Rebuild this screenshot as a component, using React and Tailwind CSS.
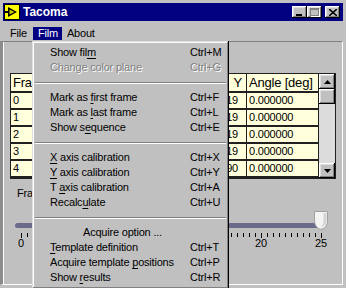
import React from "react";

const U = ({ children }) => (
  <span className="underline decoration-1 underline-offset-[2px]">{children}</span>
);

const menu = [
  { label: <>Show fil<U>m</U></>, sc: "Ctrl+M" },
  { label: "Change color plane", sc: "Ctrl+G", disabled: true },
  { sep: true },
  { label: <>Mark as <U>f</U>irst frame</>, sc: "Ctrl+F" },
  { label: <>Mark as <U>l</U>ast frame</>, sc: "Ctrl+L" },
  { label: <>Show s<U>e</U>quence</>, sc: "Ctrl+E" },
  { sep: true },
  { label: <><U>X</U> axis calibration</>, sc: "Ctrl+X" },
  { label: <><U>Y</U> axis calibration</>, sc: "Ctrl+Y" },
  { label: <>T <U>a</U>xis calibration</>, sc: "Ctrl+A" },
  { label: <>Recalc<U>u</U>late</>, sc: "Ctrl+U" },
  { sep: true },
  { label: "Acquire option ...", indent: true },
  { label: <><U>T</U>emplate definition</>, sc: "Ctrl+T" },
  { label: <>Acquire template <U>p</U>ositions</>, sc: "Ctrl+P" },
  { label: <>Show <U>r</U>esults</>, sc: "Ctrl+R" },
];

// only the parts not hidden by the open menu
const data = [
  ["0", "19", "0.000000"],
  ["1", "19", "0.000000"],
  ["2", "19", "0.000000"],
  ["3", "19", "0.000000"],
  ["4", "90", "0.000000"],
];

const raised =
  "shadow-[inset_-1px_-1px_#000,inset_1px_1px_#fff,inset_-2px_-2px_#808080,inset_2px_2px_#dfdfdf]";

function LvIcon() {
  return (
    <svg width="16" height="16" viewBox="0 0 16 16">
      <rect x="0.5" y="0.5" width="15" height="15" fill="#ffff00" stroke="#000" />
      <path d="M4 3 L13 8 L4 13 Z" fill="#000" />
      <path d="M5.5 5.5 L10.5 8 L5.5 10.5 Z" fill="#c8c800" />
      <rect x="1" y="7" width="4" height="2" fill="#000" />
    </svg>
  );
}

function TitleButton({ children, className = "" }) {
  return (
    <div className={`flex h-[12px] w-[15px] items-center justify-center bg-[#c0c0c0] ${raised} ${className}`}>
      {children}
    </div>
  );
}

function Thumb() {
  return (
    <svg width="14" height="19" viewBox="0 0 14 19">
      <path d="M0.5 0.5 H13.5 V9 Q13.5 17 7 18.5 Q0.5 17 0.5 9 Z" fill="#f4f4f4" stroke="#a0a0a0" />
      <path d="M9.5 2 V9 Q9.5 15 6 17 Q12.5 15 12.5 9 V2 Z" fill="#d4d4d4" />
    </svg>
  );
}

export default function App() {
  const ticks = Array.from({ length: 51 }, (_, i) => i);
  return (
    <div className="relative h-[288px] w-[346px] overflow-hidden bg-[#c0c0c0] font-['Liberation_Sans',Arial,sans-serif] text-[11px] leading-none tracking-[-0.2px] text-black">
      <div className="flex h-full flex-col pl-[3px] pr-[3px] pt-[3px] pb-[3px]">
        {/* title bar */}
        <div className="flex h-[18px] items-center bg-[#000080] pl-[1px] pr-[3px]">
          <LvIcon />
          <span className="ml-[3px] text-[12px] font-bold tracking-normal text-white">Tacoma</span>
          <div className="ml-auto flex items-center">
            <TitleButton>
              <div className="mt-[5px] mr-[2px] h-[2px] w-[6px] bg-black" />
            </TitleButton>
            <TitleButton>
              <div className="h-[8px] w-[9px] border border-t-2 border-[#808080] shadow-[1px_1px_0_#fff]" />
            </TitleButton>
            <TitleButton className="ml-[3px]">
              <svg width="8" height="7" viewBox="0 0 8 7">
                <path d="M0 0 L8 7 M8 0 L0 7" stroke="#000" strokeWidth="1.6" />
              </svg>
            </TitleButton>
          </div>
        </div>

        {/* menu bar */}
        <div className="mt-[1px] flex h-[19px] items-start pt-[5px]">
          <div className="h-[13px] pl-[7px] pr-[6px] leading-[13px]">File</div>
          <div className="h-[13px] w-[29px] bg-[#000080] pl-[5px] leading-[13px] text-white">Film</div>
          <div className="h-[13px] pl-[5px] leading-[13px]">About</div>
        </div>

        {/* client panel */}
        <div className="relative -ml-[3px] flex flex-1 flex-col border-t border-l-[3px] border-r border-b border-t-[#808080] border-l-[#8c8c8c] border-r-white border-b-white">
          <div className="flex flex-1 flex-col border-l border-l-white">
            {/* table */}
            <div className="ml-[6px] mt-[31px] flex h-[106px] w-[326px] border border-[#202020] bg-[#c0c0c0]">
              <div className="flex flex-col">
                <div className="flex h-[19px] border-b-2 border-[#202020] bg-[#ffffdc] text-[13px] leading-[17px]">
                  <div className="w-[49px] border-r border-[#202020] pl-[2px]">Frame</div>
                  <div className="w-[91px] border-r border-[#202020]" />
                  <div className="w-[96px] border-r border-[#202020] pr-[4px] text-right">Y</div>
                  <div className="w-[72px] border-r border-[#202020] pl-[2px]">Angle [deg]</div>
                </div>
                {data.map((r) => (
                  <div key={r[0]} className="flex h-[17px] border-b-2 border-[#202020] bg-[#ffffdc] leading-[15px]">
                    <div className="w-[49px] border-r border-[#202020] pl-[2px]">{r[0]}</div>
                    <div className="w-[91px] border-r border-[#202020]" />
                    <div className="w-[96px] border-r border-[#202020] pr-[8px] text-right">{r[1]}</div>
                    <div className="w-[72px] border-r border-[#202020] pl-[2px]">{r[2]}</div>
                  </div>
                ))}
              </div>
              {/* scrollbar */}
              <div className="flex w-[16px] flex-col">
                <div className={`flex h-[15px] items-center justify-center bg-[#c0c0c0] ${raised}`}>
                  <svg width="7" height="4" viewBox="0 0 7 4"><path d="M3.5 0 L7 4 L0 4 Z" fill="#000" /></svg>
                </div>
                <div className={`h-[15px] bg-[#c0c0c0] ${raised}`} />
                <div className="flex-1 bg-[#dcdcdc]" />
                <div className={`flex h-[15px] items-center justify-center bg-[#c0c0c0] ${raised}`}>
                  <svg width="7" height="4" viewBox="0 0 7 4"><path d="M0 0 L7 0 L3.5 4 Z" fill="#000" /></svg>
                </div>
              </div>
            </div>

            {/* slider */}
            <div className="ml-[13px] mt-[8px] h-[12px] leading-[12px]">Frame</div>
            <div className="relative ml-[11px] mt-[24px] h-[5px] w-[305px] rounded-l-full bg-[#6a6a8a]">
              <div className="absolute left-[299px] top-[-12px]">
                <Thumb />
              </div>
            </div>
            <div className="ml-[17px] mt-[5px] flex items-start gap-[5px]">
              {ticks.map((i) => (
                <div key={i} className={`w-[1px] bg-black ${i % 10 === 0 ? "h-[5px]" : "h-[4px]"}`} />
              ))}
            </div>
            <div className="ml-[7px] flex gap-[40px] leading-[11px]">
              {["0", "", "", "", "20", "25"].map((t, i) => (
                <div key={i} className="h-[11px] w-[20px] text-center">{t}</div>
              ))}
            </div>
          </div>
        </div>
      </div>

      {/* Film menu */}
      <div className="absolute left-[32px] top-[41px] h-[248px] w-[197px] bg-[#c0c0c0] pt-[4px] pl-[2px] pr-[2px] shadow-[inset_-1px_-1px_#000,inset_1px_1px_#dfdfdf,inset_-2px_-2px_#808080,inset_2px_2px_#fff]">
        {menu.map((m, i) =>
          m.sep ? (
            <div key={i} className="flex h-[15px] items-center px-[1px]">
              <div className="h-[2px] w-full border-t border-b border-t-[#808080] border-b-white" />
            </div>
          ) : (
            <div
              key={i}
              className={`flex h-[15px] items-center whitespace-nowrap ${
                m.disabled ? "text-[#808080] [text-shadow:1px_1px_0_#fff]" : ""
              }`}
            >
              <div className={m.indent ? "pl-[49px]" : "w-[156px] pl-[16px]"}>{m.label}</div>
              {m.sc && <div>{m.sc}</div>}
            </div>
          )
        )}
      </div>
    </div>
  );
}
